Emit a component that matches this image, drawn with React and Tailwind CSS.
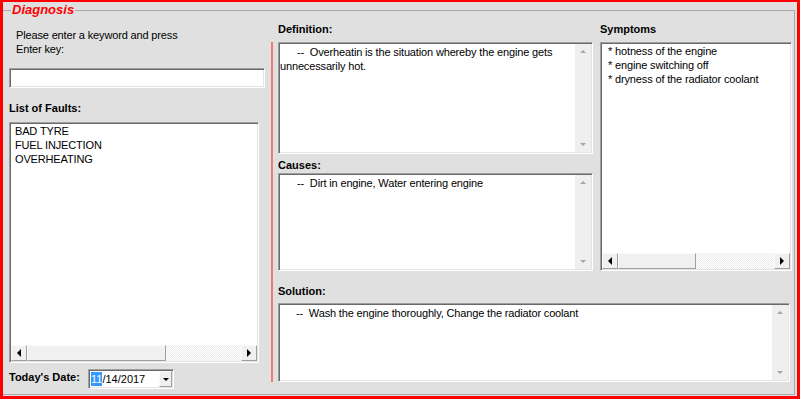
import React from "react";

const FONT = "font-['Liberation_Sans',Arial,sans-serif]";
const SUNKEN =
  "border border-t-[#a0a0a0] border-l-[#a0a0a0] border-b-white border-r-white shadow-[inset_1px_1px_0_#696969,inset_-1px_-1px_0_#e3e3e3] p-px bg-white";
const RAISED =
  "border border-t-[#fbfbfb] border-l-[#fbfbfb] border-b-[#a0a0a0] border-r-[#a0a0a0] bg-[#f0f0f0]";

function VScroll() {
  return (
    <div className="w-[16px] shrink-0 h-full bg-[#efefef] flex flex-col justify-between items-center pt-[6px] pb-[6px]">
      <div className="w-0 h-0 border-x-[3px] border-x-transparent border-b-[3px] border-b-[#a6a6a6]" />
      <div className="w-0 h-0 border-x-[3px] border-x-transparent border-t-[3px] border-t-[#a6a6a6]" />
    </div>
  );
}

function HScroll({ thumb }) {
  return (
    <div className="h-[16px] shrink-0 flex bg-[repeating-conic-gradient(#ececec_0%_25%,#ffffff_0%_50%)] bg-[length:2px_2px]">
      <div className={`w-[16px] h-full flex items-center justify-center ${RAISED}`}>
        <div className="w-0 h-0 border-y-[4px] border-y-transparent border-r-[4px] border-r-black" />
      </div>
      <div className="flex-1 flex">
        <div className={`h-full ${thumb} ${RAISED}`} />
      </div>
      <div className={`w-[16px] h-full flex items-center justify-center ${RAISED}`}>
        <div className="w-0 h-0 border-y-[4px] border-y-transparent border-l-[4px] border-l-black" />
      </div>
    </div>
  );
}

function Label({ children, className = "" }) {
  return (
    <div className={`h-[14px] leading-[14px] text-[11px] font-bold text-black ${className}`}>
      {children}
    </div>
  );
}

function TextArea({ className, children }) {
  return (
    <div className={`${SUNKEN} flex ${className}`}>
      <div className="flex-1 pt-px text-[11px] leading-[14px] tracking-[-0.15px] text-black whitespace-pre">
        {children}
      </div>
      <VScroll />
    </div>
  );
}

export default function App() {
  return (
    <div
      className={`${FONT} w-[800px] h-[399px] bg-[#e0e0e0] border-l-[3px] border-r-[3px] border-t-2 border-b-[3px] border-[#ff0000]`}
    >
      <fieldset className="w-[792px] h-[393px] border border-l-0 border-[#a9a9a9]">
        <legend className="ml-[8px] px-px h-[16px] leading-[16px] text-[13px] font-bold italic text-[#ff0000] bg-[#e0e0e0]">
          Diagnosis
        </legend>
        <div className="flex">
          {/* Left column */}
          <div className="pl-[6px] w-[262px] shrink-0 flex flex-col">
            <div className="mt-[10px] pl-[7px] text-[11px] leading-[14px] tracking-[-0.15px] text-black">
              Please enter a keyword and press
              <br />
              Enter key:
            </div>
            <div className={`mt-[12px] h-[20px] w-[256px] ${SUNKEN}`} />
            <Label className="mt-[13px]">List of Faults:</Label>
            <div className={`mt-[7px] w-[250px] h-[241px] flex flex-col ${SUNKEN}`}>
              <div className="flex-1 pl-[4px] text-[11px] leading-[14px] tracking-[-0.15px] text-black">
                <div>BAD TYRE</div>
                <div>FUEL INJECTION</div>
                <div>OVERHEATING</div>
              </div>
              <HScroll thumb="w-[139px]" />
            </div>
            <div className="mt-[6px] flex items-start">
              <Label className="mt-px w-[79px] shrink-0">Today's Date:</Label>
              <div className={`w-[86px] h-[20px] flex items-center ${SUNKEN}`}>
                <div className="flex-1 pl-px flex items-center text-[11px] leading-[14px] text-black">
                  <span className="bg-[#3399ff] text-white">11</span>
                  <span>/14/2017</span>
                </div>
                <div className={`w-[13px] h-[16px] flex items-center justify-center ${RAISED}`}>
                  <div className="w-0 h-0 border-x-[3px] border-x-transparent border-t-[3px] border-t-black" />
                </div>
              </div>
            </div>
          </div>

          {/* Red separator */}
          <div className="mt-[24px] ml-[6px] w-[2px] h-[340px] bg-[#f07a7a] shrink-0" />

          {/* Right area */}
          <div className="ml-[5px] w-[514px] flex flex-col">
            <div className="flex">
              <div className="w-[315px] flex flex-col">
                <Label className="mt-[4px]">Definition:</Label>
                <TextArea className="mt-[6px] h-[112px]">
                  <div className="pl-[17px]">{"--  Overheatin is the situation whereby the engine gets"}</div>
                  <div>unnecessarily hot.</div>
                </TextArea>
                <Label className="mt-[4px]">Causes:</Label>
                <TextArea className="mt-px h-[98px]">
                  <div className="pl-[17px]">{"--  Dirt in engine, Water entering engine"}</div>
                </TextArea>
              </div>
              <div className="ml-[7px] w-[192px] flex flex-col">
                <Label className="mt-[4px]">Symptoms</Label>
                <div className={`mt-[6px] h-[229px] flex flex-col ${SUNKEN}`}>
                  <div className="flex-1 pl-[6px] text-[11px] leading-[14px] tracking-[-0.15px] text-black">
                    <div>* hotness of the engine</div>
                    <div>* engine switching off</div>
                    <div>* dryness of the radiator coolant</div>
                  </div>
                  <HScroll thumb="w-[78px]" />
                </div>
              </div>
            </div>
            <Label className="mt-[13px]">Solution:</Label>
            <TextArea className="mt-[5px] h-[79px] w-[512px]">
              <div className="pl-[16px]">{"--  Wash the engine thoroughly, Change the radiator coolant"}</div>
            </TextArea>
          </div>
        </div>
      </fieldset>
    </div>
  );
}
